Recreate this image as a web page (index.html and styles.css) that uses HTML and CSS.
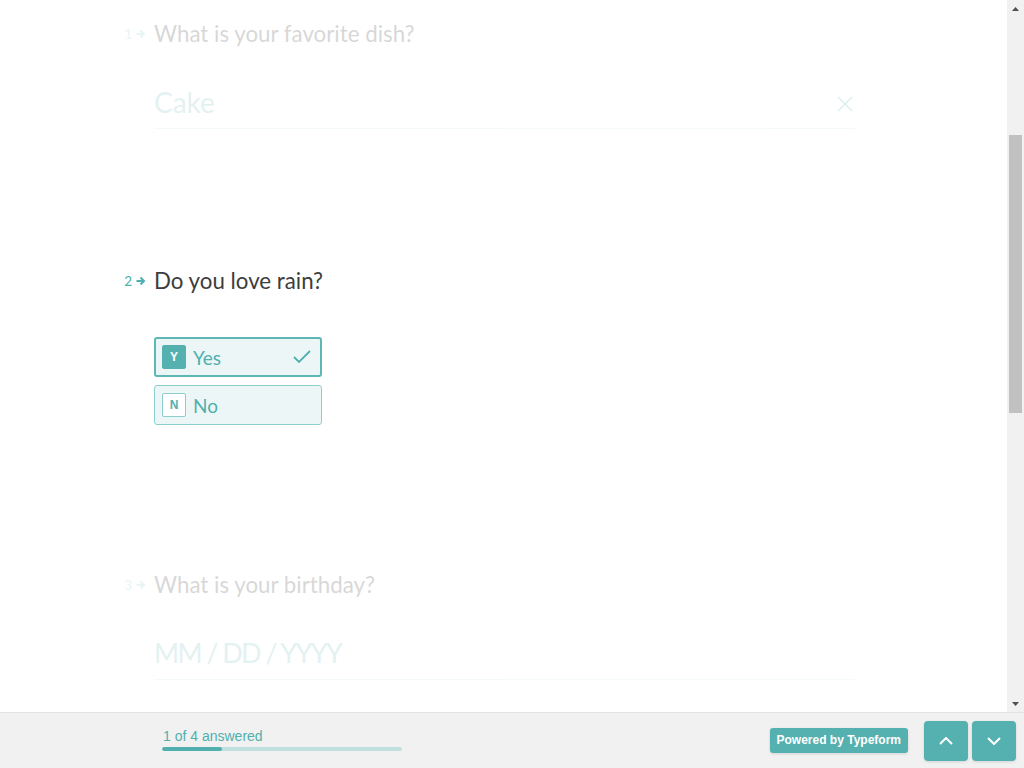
FILE: index.html
```html
<!DOCTYPE html>
<html lang="en">
<head>
<meta charset="utf-8">
<title>Typeform</title>
<link rel="stylesheet" href="styles.css">
</head>
<body>
<div class="app">
  <div class="viewport">
    <main class="scroller" id="scroller">
      <div class="form">
        <section class="question faded">
          <h2 class="q-title"><span class="q-num">1<svg class="arrow" viewBox="0 0 10 10" width="10" height="10"><path d="M0.5 5h7.5M4.5 1.5L8 5 4.5 8.5" fill="none" stroke="currentColor" stroke-width="2"/></svg></span>What is your favorite dish?</h2>
          <div class="text-input">
            <span class="value">Cake</span>
            <svg class="clear" viewBox="0 0 16 16" width="16" height="16"><path d="M1 1l14 14M15 1L1 15" stroke="currentColor" stroke-width="1.4" fill="none"/></svg>
          </div>
        </section>

        <section class="question active">
          <h2 class="q-title"><span class="q-num">2<svg class="arrow" viewBox="0 0 10 10" width="10" height="10"><path d="M0.5 5h7.5M4.5 1.5L8 5 4.5 8.5" fill="none" stroke="currentColor" stroke-width="2"/></svg></span>Do you love rain?</h2>
          <div class="choices">
            <div class="choice selected">
              <span class="key">Y</span>
              <span class="label">Yes</span>
              <svg class="check" viewBox="0 0 18 14" width="18" height="14"><path d="M1 7l5 5L17 1" fill="none" stroke="currentColor" stroke-width="1.8"/></svg>
            </div>
            <div class="choice">
              <span class="key">N</span>
              <span class="label">No</span>
            </div>
          </div>
        </section>

        <section class="question faded">
          <h2 class="q-title"><span class="q-num">3<svg class="arrow" viewBox="0 0 10 10" width="10" height="10"><path d="M0.5 5h7.5M4.5 1.5L8 5 4.5 8.5" fill="none" stroke="currentColor" stroke-width="2"/></svg></span>What is your birthday?</h2>
          <div class="text-input">
            <span class="value date">MM / DD / YYYY</span>
          </div>
        </section>
      </div>
    </main>
    <div class="scrollbar" aria-hidden="true">
      <div class="sb-btn"><svg viewBox="0 0 7 4" width="7" height="4"><path d="M0 4L3.5 0 7 4z" fill="#505050"/></svg></div>
      <div class="sb-track"><div class="sb-thumb"></div></div>
      <div class="sb-btn"><svg viewBox="0 0 7 4" width="7" height="4"><path d="M0 0L3.5 4 7 0z" fill="#505050"/></svg></div>
    </div>
  </div>

  <footer class="bottom-bar">
    <div class="progress">
      <div class="progress-text">1 of 4 answered</div>
      <div class="progress-track"><div class="progress-fill" style="width:25%"></div></div>
    </div>
    <div class="actions">
      <a class="powered">Powered by <b>Typeform</b></a>
      <div class="nav">
        <button class="nav-btn" aria-label="Previous"><svg viewBox="0 0 14 8" width="14" height="8"><path d="M1 7l6-6 6 6" fill="none" stroke="#fff" stroke-width="2"/></svg></button>
        <button class="nav-btn" aria-label="Next"><svg viewBox="0 0 14 8" width="14" height="8"><path d="M1 1l6 6 6-6" fill="none" stroke="#fff" stroke-width="2"/></svg></button>
      </div>
    </div>
  </footer>
</div>
<script src="script.js"></script>
</body>
</html>
```

FILE: styles.css
```css
* { box-sizing: border-box; }
html, body { margin: 0; padding: 0; height: 100%; }
body {
  font-family: "Lato", "Liberation Sans", sans-serif;
  background: #fff;
  overflow: hidden;
}
.app {
  display: flex;
  flex-direction: column;
  height: 768px;
}
.viewport {
  position: relative;
  height: 712px;
  flex: none;
}
.scroller {
  height: 100%;
  overflow-y: scroll;
  scrollbar-width: none;
}
.scroller::-webkit-scrollbar { display: none; }
.scrollbar {
  position: absolute;
  top: 0;
  right: 0;
  bottom: 0;
  width: 17px;
  background: #f1f1f1;
  display: flex;
  flex-direction: column;
}
.sb-btn {
  height: 17px;
  flex: none;
  display: flex;
  align-items: center;
  justify-content: center;
}
.sb-track {
  flex: 1;
  padding: 118px 2px 0;
}
.sb-thumb {
  height: 278px;
  background: #c1c1c1;
}
.form {
  min-height: 1736px;
  padding: 321px 0 0 154px;
  width: 855px;
  display: flex;
  flex-direction: column;
  gap: 137px;
}
.question { width: 701px; }
.question.faded { opacity: 0.2; }
.q-title {
  margin: 0;
  position: relative;
  font-size: 22.3px;
  line-height: 30px;
  font-weight: 400;
  color: #3d3d3d;
}
.q-num {
  position: absolute;
  right: 100%;
  top: 0;
  margin-right: 8px;
  font-size: 13.5px;
  line-height: 30px;
  color: #4fb0ae;
  display: flex;
  align-items: center;
  gap: 4px;
}
.arrow { color: #4fb0ae; }
.faded .q-num { opacity: 0.6; }
.text-input {
  margin-top: 33px;
  display: flex;
  align-items: center;
  justify-content: space-between;
  border-bottom: 1px solid rgba(79, 176, 174, 0.3);
  padding-bottom: 6px;
}
.text-input .value {
  font-size: 28px;
  line-height: 40px;
  color: #4fb0ae;
  opacity: 0.8;
}
.text-input .value.date {
  font-size: 27px;
  letter-spacing: -1.6px;
}
.clear { color: #4fb0ae; margin-right: 2px; margin-top: 4px; }
.choices {
  margin-top: 41px;
  display: flex;
  flex-direction: column;
  gap: 8px;
  width: 168px;
  margin-bottom: 8px;
}
.choice {
  height: 40px;
  display: flex;
  align-items: center;
  padding: 0 7px;
  border: 1px solid #8ccfcd;
  border-radius: 3px;
  background: #edf6f7;
  color: #4fb0ae;
}
.choice.selected {
  border: 2px solid #5cb7b5;
  padding: 0 6px;
}
.key {
  width: 24px;
  height: 24px;
  display: flex;
  align-items: center;
  justify-content: center;
  font-family: "Liberation Sans", Arial, sans-serif;
  font-size: 12px;
  font-weight: 700;
  border: 1px solid #8ccfcd;
  background: #fff;
  border-radius: 2px;
  color: #4fb0ae;
}
.selected .key {
  background: #55b1af;
  border-color: #55b1af;
  color: #fff;
}
.label {
  margin-left: 7px;
  font-size: 19px;
  flex: 1;
}
.check { color: #4fb0ae; margin-right: 3px; }

.bottom-bar {
  height: 56px;
  flex: none;
  background: #f1f1f1;
  border-top: 1px solid #e3e3e3;
  display: flex;
  align-items: center;
  justify-content: space-between;
  font-family: "Liberation Sans", Arial, sans-serif;
}
.progress {
  padding-left: 162px;
  padding-bottom: 2px;
}
.progress-text {
  font-size: 14px;
  line-height: 16px;
  color: #4fb0ae;
  padding-left: 1px;
}
.progress-track {
  margin-top: 3px;
  width: 240px;
  height: 4px;
  border-radius: 2px;
  background: #bfe0df;
  overflow: hidden;
}
.progress-fill {
  height: 100%;
  background: #4fb0ae;
  border-radius: 2px;
}
.actions {
  display: flex;
  align-items: center;
  gap: 16px;
  padding-right: 8px;
}
.powered {
  display: block;
  background: #55b1af;
  color: #fff;
  font-size: 12px;
  font-weight: 700;
  line-height: 25px;
  height: 25px;
  padding: 0 7px;
  border-radius: 3px;
  box-shadow: 0 1px 3px rgba(0,0,0,0.12);
}
.powered b { font-weight: 700; }
.nav { display: flex; gap: 4px; }
.nav-btn {
  width: 44px;
  height: 40px;
  border: 0;
  border-radius: 4px;
  background: #55b1af;
  display: flex;
  align-items: center;
  justify-content: center;
  padding: 0;
  box-shadow: 0 1px 3px rgba(0,0,0,0.12);
}
```

FILE: script.js
```js
document.getElementById('scroller').scrollTop = 302;
```
